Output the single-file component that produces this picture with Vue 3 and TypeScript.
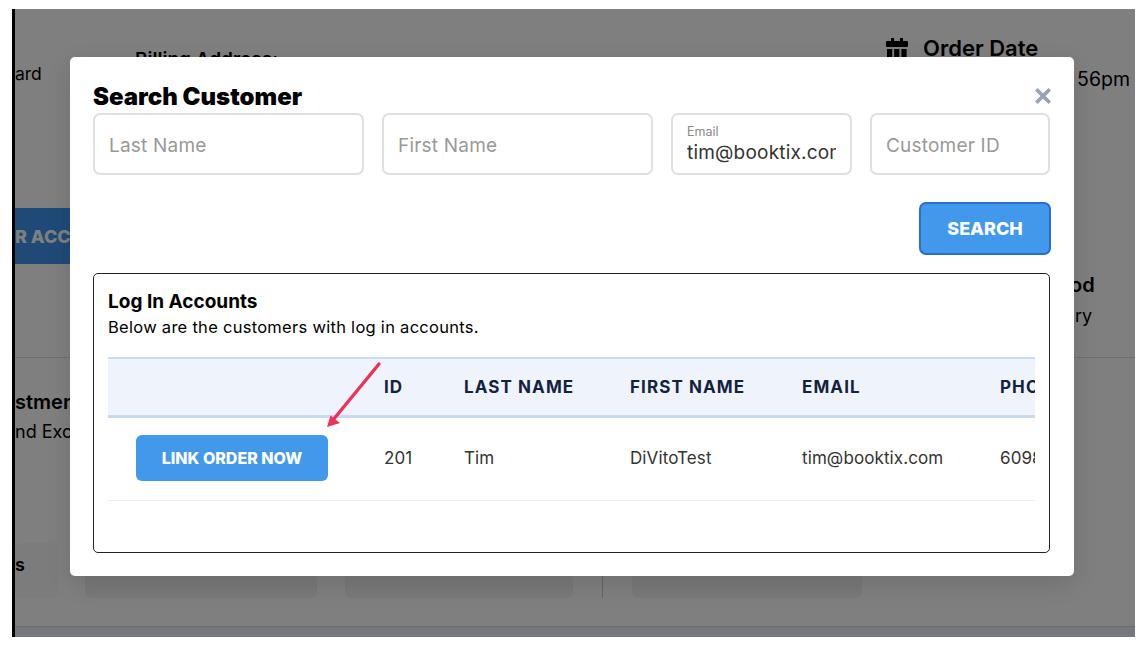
<script setup lang="ts">
interface Customer {
  id: number
  last: string
  first: string
  email: string
  phone: string
}
const columns: string[] = ['', 'ID', 'LAST NAME', 'FIRST NAME', 'EMAIL', 'PHONE']
const customers: Customer[] = [
  { id: 201, last: 'Tim', first: 'DiVitoTest', email: 'tim@booktix.com', phone: '6098675309' }
]
const calendarCells: number[] = [0, 1, 2]
</script>

<template>
  <div class="shot">
    <div class="screen">
      <main class="page">
        <section class="info">
          <p class="card-type">ard</p>
          <h4 class="billing">Billing Address:</h4>
          <div class="date">
            <h4 class="date-title">
              <svg class="cal" viewBox="0 0 22 20" aria-hidden="true">
                <rect x="5" y="0" width="3" height="5" />
                <rect x="14" y="0" width="3" height="5" />
                <rect x="0" y="3" width="22" height="6" rx="1" />
                <rect
                  v-for="c in calendarCells"
                  :key="c"
                  :x="1 + c * 7.2"
                  y="11"
                  width="5.2"
                  height="8"
                />
              </svg>
              Order Date
            </h4>
            <p class="date-value">56pm</p>
          </div>
        </section>
        <div class="account-row">
          <button class="account-btn">R ACCOUNT</button>
        </div>
        <section class="method">
          <h4>od</h4>
          <p>ry</p>
        </section>
        <section class="adjust">
          <h4>stments</h4>
          <p>nd Exchanges</p>
        </section>
        <section class="totals">
          <div class="tile tile-a"><b>s</b></div>
          <div class="tile tile-b"></div>
          <div class="tile tile-c"></div>
          <i class="rule"></i>
          <div class="tile tile-d"></div>
        </section>
        <footer class="band"></footer>
      </main>

      <div class="overlay">
        <div class="modal">
          <button class="close" aria-label="Close">
            <svg viewBox="0 0 16 16" aria-hidden="true">
              <path d="M2 2 L14 14 M14 2 L2 14" />
            </svg>
          </button>
          <h2 class="title">Search Customer</h2>
          <form class="fields" @submit.prevent>
            <label class="field"><input placeholder="Last Name" /></label>
            <label class="field"><input placeholder="First Name" /></label>
            <label class="field filled">
              <span class="float">Email</span>
              <input value="tim@booktix.com" />
            </label>
            <label class="field"><input placeholder="Customer ID" /></label>
          </form>
          <div class="actions">
            <button class="search">SEARCH</button>
          </div>
          <section class="box">
            <h3>Log In Accounts</h3>
            <p>Below are the customers with log in accounts.</p>
            <div class="table-wrap">
              <table>
                <colgroup>
                  <col class="c0" /><col class="c1" /><col class="c2" /><col class="c3" /><col class="c4" /><col class="c5" />
                </colgroup>
                <thead>
                  <tr>
                    <th v-for="col in columns" :key="col">{{ col }}</th>
                  </tr>
                </thead>
                <tbody>
                  <tr v-for="c in customers" :key="c.id">
                    <td class="action"><button class="link">LINK ORDER NOW</button></td>
                    <td>{{ c.id }}</td>
                    <td>{{ c.last }}</td>
                    <td>{{ c.first }}</td>
                    <td>{{ c.email }}</td>
                    <td>{{ c.phone }}</td>
                  </tr>
                </tbody>
              </table>
            </div>
          </section>
        </div>
      </div>
    </div>

    <svg class="arrow" viewBox="0 0 1142 646" aria-hidden="true">
      <path class="shaft" d="M379 364 L333 420" />
      <path class="head" d="M327 427 L330.5 415.5 L340 423 Z" />
    </svg>
  </div>
</template>

<style>
html,
body {
  margin: 0;
  background: #fff;
}
</style>

<style scoped>
.shot {
  position: relative;
  width: 1142px;
  height: 646px;
  padding: 9px 0 0 12px;
  box-sizing: border-box;
  overflow: hidden;
  background: #fff;
  font-family: Inter, "Open Sans", sans-serif;
}
.screen {
  position: relative;
  width: 1123px;
  height: 628px;
  box-sizing: border-box;
  border-left: 3px solid #000;
  overflow: hidden;
}
.page {
  height: 100%;
  display: flex;
  flex-direction: column;
  background: #fff;
  color: #000;
}
.page h4,
.page p {
  margin: 0;
}
.info {
  display: flex;
  height: 199px;
  box-sizing: border-box;
  padding-top: 28px;
}
.card-type {
  font-size: 17.5px;
  line-height: 24px;
  margin-top: 25px !important;
  width: 120px;
}
.billing {
  margin-top: 11px !important;
  font-size: 19px;
  font-weight: 600;
  line-height: 24px;
  width: 751px;
}
.date {
  width: 249px;
}
.date-title {
  display: flex;
  align-items: center;
  gap: 15px;
  font-size: 22px;
  font-weight: 600;
  line-height: 22px;
}
.cal {
  width: 22px;
  height: 20px;
  fill: #000;
}
.date-value {
  margin-top: 8px !important;
  font-size: 19.5px;
  line-height: 24px;
  text-align: right;
  padding-right: 5px;
}
.account-row {
  height: 56px;
}
.account-btn {
  height: 56px;
  width: 200px;
  border: 0;
  padding: 0;
  text-align: left;
  background: #3f94f0;
  color: #fff;
  font: 800 18px Inter, sans-serif;
}
.method {
  height: 94px;
  box-sizing: border-box;
  padding-top: 9px;
  padding-left: 1055px;
  border-bottom: 1px solid #ddd;
}
.method h4 {
  font-size: 20px;
  font-weight: 600;
  line-height: 24px;
}
.method p {
  font-size: 18px;
  line-height: 38px;
  padding-left: 5px;
}
.adjust {
  height: 185px;
  box-sizing: border-box;
  padding-top: 32px;
}
.adjust h4 {
  font-size: 20px;
  font-weight: 600;
  line-height: 24px;
}
.adjust p {
  font-size: 18px;
  line-height: 36px;
}
.totals {
  display: flex;
  align-items: stretch;
  height: 55px;
}
.tile {
  background: #f3f3f3;
  border-radius: 6px;
  box-sizing: border-box;
  padding-top: 12px;
}
.tile b {
  font-size: 18px;
  font-weight: 600;
  line-height: 20px;
}
.tile-a { width: 43px; background: #f9f9f9; }
.tile-b { width: 232px; margin-left: 27px; }
.tile-c { width: 228px; margin-left: 28px; }
.rule {
  width: 1px;
  margin-left: 29px;
  background: #ccc;
}
.tile-d { width: 230px; margin-left: 29px; }
.band {
  margin-top: 28px;
  flex: 1;
  background: #eaf3fb;
  border-top: 1px solid #cfdbe8;
}
.overlay {
  position: absolute;
  inset: 0;
  background: rgba(0, 0, 0, 0.5);
  padding: 48px 0 0 55px;
}
.modal {
  position: relative;
  width: 1004px;
  height: 519px;
  box-sizing: border-box;
  padding: 23px 24px 0 23px;
  background: #fff;
  border-radius: 5px;
  box-shadow: 0 8px 24px rgba(0, 0, 0, 0.12);
}
.close {
  position: absolute;
  top: 30px;
  right: 22px;
  width: 18px;
  height: 18px;
  padding: 0;
  border: 0;
  background: none;
}
.close svg {
  display: block;
  width: 18px;
  height: 18px;
}
.close path {
  fill: none;
  stroke: #98a2b3;
  stroke-width: 3.2;
}
.title {
  margin: 0;
  font-size: 24px;
  font-weight: 900;
  line-height: 33px;
  color: #000;
}
.fields {
  display: grid;
  grid-template-columns: 271px 271px 181px 180px;
  gap: 18px;
}
.field {
  position: relative;
  display: block;
  height: 62px;
  box-sizing: border-box;
  border: 2px solid #e0e0e0;
  border-radius: 7px;
  background: #fff;
}
.field input {
  display: block;
  width: 100%;
  height: 100%;
  box-sizing: border-box;
  border: 0;
  outline: 0;
  padding: 2px 14px 0;
  background: transparent;
  color: #333;
  font: 400 19px Inter, sans-serif;
  letter-spacing: 0.2px;
}
.field input::placeholder {
  color: #999;
  opacity: 1;
}
.filled input {
  padding-top: 16px;
}
.float {
  position: absolute;
  top: 9px;
  left: 14px;
  font-size: 12.5px;
  line-height: 16px;
  color: #888;
}
.actions {
  display: flex;
  justify-content: flex-end;
  margin-top: 27px;
}
.search {
  width: 132px;
  height: 53px;
  margin-right: -1px;
  box-sizing: border-box;
  border: 2px solid #2b6cd0;
  border-radius: 7px;
  background: #4299ec;
  color: #fff;
  font: 800 18px Inter, sans-serif;
}
.box {
  height: 280px;
  box-sizing: border-box;
  margin-top: 18px;
  padding: 15px 14px 0;
  border: 1px solid #222;
  border-radius: 5px;
}
.box h3 {
  margin: 0;
  font-size: 19px;
  font-weight: 700;
  line-height: 26px;
  color: #000;
}
.box p {
  margin: 0;
  font-size: 16.5px;
  line-height: 24px;
  letter-spacing: 0.28px;
  color: #000;
}
.table-wrap {
  width: 927px;
  margin-top: 18px;
  overflow: hidden;
}
table {
  width: 1076px;
  table-layout: fixed;
  border-collapse: collapse;
}
.c0 { width: 260px; }
.c1 { width: 80px; }
.c2 { width: 166px; }
.c3 { width: 172px; }
.c4 { width: 198px; }
.c5 { width: 200px; }
th {
  height: 58px;
  box-sizing: border-box;
  padding: 0 16px;
  text-align: left;
  background: #eff4fc;
  border-top: 2px solid #cbdcf0;
  border-bottom: 3px solid #c8daf0;
  color: #12233f;
  font-size: 17px;
  font-weight: 700;
  letter-spacing: 1.1px;
  white-space: nowrap;
}
td {
  height: 84px;
  box-sizing: border-box;
  padding: 0 16px 2px;
  border-bottom: 1px solid #eee;
  color: #333;
  font-size: 17px;
  letter-spacing: 0.1px;
  white-space: nowrap;
}
.action {
  padding: 0 0 2px 28px;
}
.link {
  display: block;
  width: 192px;
  height: 46px;
  border: 0;
  border-radius: 6px;
  background: #4299ec;
  color: #fff;
  font: 800 16px Inter, sans-serif;
}
.arrow {
  position: absolute;
  left: 0;
  top: 0;
  width: 1142px;
  height: 646px;
  pointer-events: none;
}
.shaft {
  fill: none;
  stroke: #ee3158;
  stroke-width: 3.4;
  stroke-linecap: round;
}
.head {
  fill: #ee3158;
}
</style>
